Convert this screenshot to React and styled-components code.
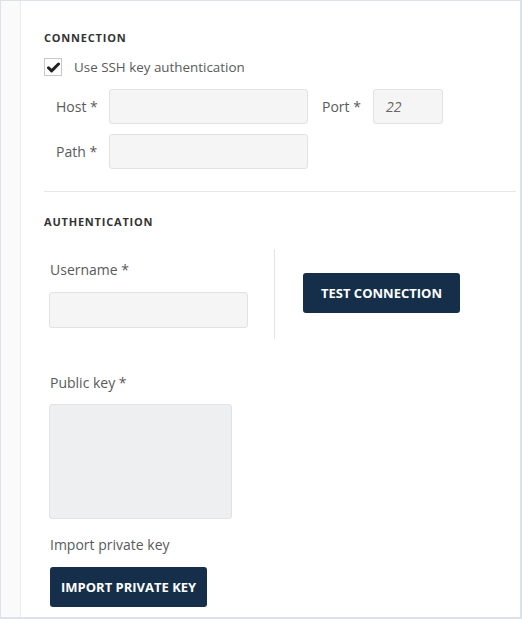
import React from "react";
import styled, { createGlobalStyle } from "styled-components";

const Global = createGlobalStyle`
  html, body { margin: 0; padding: 0; background: #fff; }
  body { font-family: "Open Sans", "Liberation Sans", sans-serif; color: #555; }
  * { box-sizing: border-box; }
`;

const Frame = styled.div`
  width: 522px;
  height: 619px;
  border-top: 1px solid #dbe2ec;
  border-left: 1px solid #dbe2ec;
  border-right: 2px solid #dbe2ec;
  border-bottom: 2px solid #dbe2ec;
  display: flex;
  overflow: hidden;
`;

const Strip = styled.div`
  width: 20px;
  flex: none;
  background: #fafafa;
  border-right: 1px solid #ebebeb;
`;

const Content = styled.div`
  flex: 1;
  padding: 29px 4px 0 23px;
  display: flex;
  flex-direction: column;
`;

const Heading = styled.div`
  font-size: 11px;
  font-weight: 700;
  letter-spacing: 0.8px;
  color: #333;
  text-transform: uppercase;
  line-height: 16px;
`;

const CheckRow = styled.label`
  display: flex;
  align-items: center;
  gap: 12px;
  margin-top: 11px;
  font-size: 13.4px;
  line-height: 20px;
  color: #5a5a5a;
`;

const Box = styled.span`
  width: 18px;
  height: 18px;
  border: 1px solid #c8c8c8;
  background: #fff;
  display: flex;
  align-items: center;
  justify-content: center;
`;

const Row = styled.div`
  display: flex;
  align-items: center;
  margin-top: ${(p) => p.$mt}px;
  padding-left: 12px;
`;

const InlineLabel = styled.span`
  font-size: 14px;
  color: #5a5a5a;
  width: ${(p) => p.$w}px;
  flex: none;
  margin-left: ${(p) => p.$ml || 0}px;
`;

const Input = styled.div`
  width: ${(p) => p.$w}px;
  height: ${(p) => p.$h || 35}px;
  background: ${(p) => p.$bg || "#f5f5f5"};
  border: 1px solid #e2e2e2;
  border-radius: 3px;
  font-size: 14px;
  font-style: italic;
  color: #666;
  display: flex;
  align-items: center;
  padding-left: 12px;
  margin-top: ${(p) => p.$mt || 0}px;
  flex: none;
`;

const Divider = styled.div`
  height: 1px;
  background: #e8e8e8;
  margin-top: 22px;
`;

const AuthHeading = styled(Heading)`
  margin-top: 22px;
`;

const AuthRow = styled.div`
  display: flex;
  margin-top: 19px;
  padding-left: 5px;
`;

const Col = styled.div`
  display: flex;
  flex-direction: column;
`;

const Label = styled.div`
  font-size: 14px;
  color: #5a5a5a;
  line-height: 20px;
  margin-left: 1px;
  margin-top: ${(p) => p.$mt || 0}px;
`;

const Sep = styled.div`
  width: 1px;
  height: 90px;
  background: #e5e5e5;
  margin-left: 26px;
`;

const Button = styled.button`
  height: 40px;
  padding: 0 ${(p) => p.$px || 18}px;
  background: #152f4a;
  color: #fff;
  border: none;
  border-radius: 3px;
  font-family: "Open Sans", "Liberation Sans", sans-serif;
  font-size: 13px;
  font-weight: 700;
  text-transform: uppercase;
  align-self: flex-start;
  margin-top: ${(p) => p.$mt || 0}px;
  margin-left: ${(p) => p.$ml || 0}px;
`;

const Section = styled.div`
  display: flex;
  flex-direction: column;
  padding-left: 5px;
  margin-top: ${(p) => p.$mt}px;
`;

export default function App() {
  return (
    <>
      <Global />
      <Frame>
        <Strip />
        <Content>
          <Heading>Connection</Heading>
          <CheckRow>
            <Box>
              <svg width="13" height="11" viewBox="0 0 13 11">
                <path d="M1.5 5.8 L4.6 8.9 L11.5 2" fill="none" stroke="#222" strokeWidth="3" strokeLinecap="round" strokeLinejoin="round" />
              </svg>
            </Box>
            Use SSH key authentication
          </CheckRow>
          <Row $mt={12}>
            <InlineLabel $w={53}>Host *</InlineLabel>
            <Input $w={199} />
            <InlineLabel $w={51} $ml={14}>Port *</InlineLabel>
            <Input $w={70}>22</Input>
          </Row>
          <Row $mt={10}>
            <InlineLabel $w={53}>Path *</InlineLabel>
            <Input $w={199} />
          </Row>
          <Divider />
          <AuthHeading>Authentication</AuthHeading>
          <AuthRow>
            <Col>
              <Label $mt={11}>Username *</Label>
              <Input $w={199} $h={36} $mt={12} />
            </Col>
            <Sep />
            <Button $mt={24} $ml={28} $px={18}>Test connection</Button>
          </AuthRow>
          <Section $mt={34}>
            <Label>Public key *</Label>
            <Input $w={183} $h={115} $bg="#eeeff0" $mt={11} />
            <Label $mt={16}>Import private key</Label>
            <Button $mt={12} $ml={1} $px={11}>Import private key</Button>
          </Section>
        </Content>
      </Frame>
    </>
  );
}
